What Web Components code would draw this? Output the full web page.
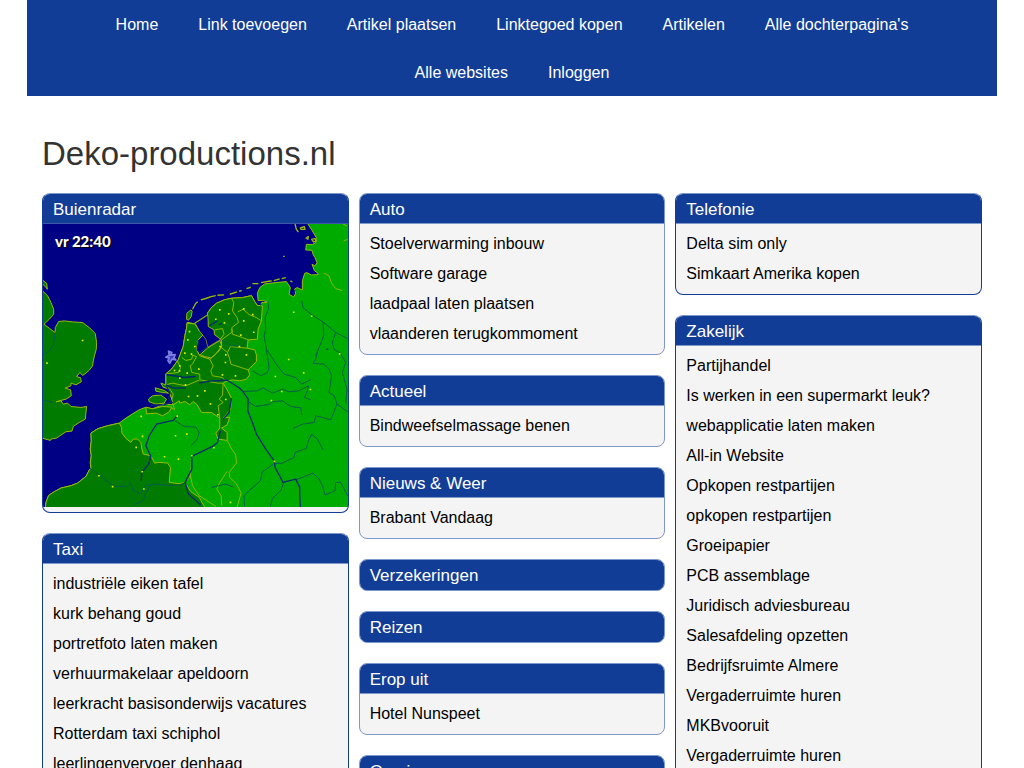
<!DOCTYPE html>
<html lang="nl">
<head>
<meta charset="utf-8">
<meta name="viewport" content="width=device-width, initial-scale=1">
<title>Deko-productions.nl</title>
<style>
  body { margin: 0; background: #fff; color: #000; font-family: "Liberation Sans", Arial, sans-serif; font-size: 16px; }
</style>
</head>
<body>
<dp-page>
  <dp-nav slot="nav">
    <a href="#">Home</a>
    <a href="#">Link toevoegen</a>
    <a href="#">Artikel plaatsen</a>
    <a href="#">Linktegoed kopen</a>
    <a href="#">Artikelen</a>
    <a href="#">Alle dochterpagina's</a>
    <a href="#">Alle websites</a>
    <a href="#">Inloggen</a>
  </dp-nav>
  <span slot="title">Deko-productions.nl</span>
  <dp-column>
    <dp-box heading="Buienradar" flush><dp-radar time="vr 22:40"></dp-radar></dp-box>
    <dp-box heading="Taxi">
      <a href="#">industriële eiken tafel</a>
      <a href="#">kurk behang goud</a>
      <a href="#">portretfoto laten maken</a>
      <a href="#">verhuurmakelaar apeldoorn</a>
      <a href="#">leerkracht basisonderwijs vacatures</a>
      <a href="#">Rotterdam taxi schiphol</a>
      <a href="#">leerlingenvervoer denhaag</a>
    </dp-box>
  </dp-column>
  <dp-column class="mid">
    <dp-box heading="Auto">
      <a href="#">Stoelverwarming inbouw</a>
      <a href="#">Software garage</a>
      <a href="#">laadpaal laten plaatsen</a>
      <a href="#">vlaanderen terugkommoment</a>
    </dp-box>
    <dp-box heading="Actueel"><a href="#">Bindweefselmassage benen</a></dp-box>
    <dp-box heading="Nieuws &amp; Weer"><a href="#">Brabant Vandaag</a></dp-box>
    <dp-box heading="Verzekeringen" empty></dp-box>
    <dp-box heading="Reizen" empty></dp-box>
    <dp-box heading="Erop uit"><a href="#">Hotel Nunspeet</a></dp-box>
    <dp-box heading="Overig" empty></dp-box>
  </dp-column>
  <dp-column>
    <dp-box heading="Telefonie">
      <a href="#">Delta sim only</a>
      <a href="#">Simkaart Amerika kopen</a>
    </dp-box>
    <dp-box heading="Zakelijk">
      <a href="#">Partijhandel</a>
      <a href="#">Is werken in een supermarkt leuk?</a>
      <a href="#">webapplicatie laten maken</a>
      <a href="#">All-in Website</a>
      <a href="#">Opkopen restpartijen</a>
      <a href="#">opkopen restpartijen</a>
      <a href="#">Groeipapier</a>
      <a href="#">PCB assemblage</a>
      <a href="#">Juridisch adviesbureau</a>
      <a href="#">Salesafdeling opzetten</a>
      <a href="#">Bedrijfsruimte Almere</a>
      <a href="#">Vergaderruimte huren</a>
      <a href="#">MKBvooruit</a>
      <a href="#">Vergaderruimte huren</a>
    </dp-box>
  </dp-column>
</dp-page>

<template id="page-tpl">
  <style>
    :host { display: block; max-width: 970px; margin: 0 auto; }
    main { padding: 0 15px 20px; }
    h1 { margin: 40px 0 22px; font-size: 33px; line-height: 35px; font-weight: 400; color: #333; }
    .grid { display: grid; grid-template-columns: repeat(3, minmax(0, 1fr)); gap: 10px; align-items: start; }
    @media (max-width: 700px) { .grid { grid-template-columns: minmax(0, 1fr); } }
  </style>
  <slot name="nav"></slot>
  <main>
    <h1><slot name="title"></slot></h1>
    <div class="grid"><slot></slot></div>
  </main>
</template>

<template id="nav-tpl">
  <style>
    :host { display: block; background: #123d96; }
    nav { display: flex; flex-wrap: wrap; justify-content: center; padding: 0 15px; }
    ::slotted(a) { padding: 2px 20px 0; line-height: 46px; color: #fff; text-decoration: none; }
  </style>
  <nav><slot></slot></nav>
</template>

<template id="column-tpl">
  <style>
    :host { display: flex; flex-direction: column; gap: 20px; }
    :host(.mid) { --edge: #7f98cb; }
  </style>
  <slot></slot>
</template>

<template id="box-tpl">
  <style>
    :host { display: block; box-sizing: border-box; border: 1px solid var(--edge, #123d96); border-top-color: #7f98cb; border-radius: 8px; background: #f4f4f4; overflow: hidden; }
    h2 { box-sizing: border-box; height: 30px; margin: 0; padding: 2px 10px 0; border-bottom: 1px solid #7f98cb; background: #123d96; color: #fff; font-size: 17px; line-height: 28px; font-weight: 400; }
    .body { padding: 5px 10px; }
    :host([flush]) .body { padding: 0 0 5px; }
    :host([flush]) h2 { border-bottom-color: #3c58a8; }
    :host([empty]) .body { display: none; }
    :host([empty]) h2 { border-bottom-color: #123d96; }
    ::slotted(a) { display: block; line-height: 30px; color: #000; text-decoration: none; }
  </style>
  <h2></h2>
  <div class="body"><slot></slot></div>
</template>

<template id="radar-tpl">
  <style>
    :host { display: block; position: relative; }
    svg { display: block; width: 100%; aspect-ratio: 915 / 851; background: #000084; }
    time { position: absolute; left: 12px; top: 7px; font: 900 15px/20px Lato, sans-serif; color: #fff; text-shadow: 1px 1px 1px #000; }
    .land { fill: #00ab00; stroke: #9cbc00; stroke-width: 3; }
    .dark { fill: #007b00; stroke: #9cbc00; stroke-width: 3; }
    .sea { fill: #000084; stroke: #9cbc00; stroke-width: 2; }
    .border { fill: none; stroke: #8cb800; stroke-width: 3; }
    .river { fill: none; stroke: #005c48; stroke-width: 3; }
    .deep { fill: none; stroke: #002a70; stroke-width: 4; }
    .towns { fill: none; stroke: #dcf000; stroke-width: 5; stroke-linecap: square; }
    .isles { fill: none; stroke: #9cbc00; stroke-width: 4; }
    .rain { fill: #4040c0; stroke: #8080e0; stroke-width: 5; }
  </style>
  <svg viewBox="21 114 915 851" preserveAspectRatio="none" role="img" aria-label="Radarkaart" stroke-linejoin="round">
    <!-- continent -->
    <path class="land" d="M28 970L30 950 38 929 55 918 75 907 105 900 125 892 150 872 160 853 165 848 163 830 166 810 163 790 166 765 165 742 185 729 215 720 250 712 270 697 290 684 310 672 328 665 350 669 385 655 412 657 408 640 400 615 390 597 390 564 407 550 427 522 442 482 447 450 452 427 454 410 477 414 492 437 502 447 487 462 482 492 492 510 522 520 545 500 557 485 557 462 537 447 534 432 517 422 515 382 527 365 542 352 565 342 587 337 620 335 647 329 657 347 664 358 672 360 678 350 694 349 684 344 667 344 665 322 672 305 687 294 720 290 752 287 764 305 760 325 774 333 780 322 776 310 784 305 800 312 800 285 807 262 813 260 827 267 847 266 847 262 836 254 829 235 838 240 844 230 838 215 832 205 829 193 810 192 812 175 830 176 840 170 842 155 827 130 814 110H945V975Z"/>
    <!-- England -->
    <path class="dark" d="M15 310L35 330 45 350 53 370 53 385 40 400 24 415 40 427 57 440 58 425 68 407 85 405 110 408 140 410 160 425 178 443 182 470 181 490 176 508 172 525 170 540 160 553 150 562 140 569 132 560 122 572 134 576 136 588 120 597 105 592 105 600 88 607 104 612 106 630 90 640 60 648 75 645 82 655 95 652 105 662 135 665 152 662 148 700 130 710 112 722 108 736 90 738 75 748 62 757 45 760 43 764 15 756Z"/>
    <path class="dark" d="M15 278L24 286 32 292 34 310 28 302 15 290Z"/>
    <!-- France -->
    <path class="dark" d="M28 970L30 950 38 929 55 918 75 907 105 900 125 892 150 872 160 853 165 848 163 830 166 810 163 790 166 765 165 742 185 729 215 720 250 712 257 725 258 742 270 758 285 770 292 760 305 760 315 770 318 790 322 805 345 810 356 832 370 830 395 832 404 845 400 890 430 894 447 890 465 918 490 935 510 970Z"/>
    <!-- Netherlands -->
    <path class="dark" d="M412 657L408 640 400 615 390 597 390 564 407 550 427 522 442 482 447 450 452 427 454 410 477 414 492 437 502 447 487 462 482 492 492 510 522 520 545 500 557 485 557 462 537 447 534 432 517 422 515 382 527 365 542 352 565 342 587 337 620 335 647 329 657 347 664 358 680 360 677 405 667 430 665 460 637 462 634 487 657 492 662 507 662 527 637 552 642 567 632 580 612 585 590 582 570 587 562 592 574 612 587 637 584 672 562 697 582 694 574 717 557 727 574 740 574 764 547 760 540 742 552 727 552 697 527 680 497 680 484 657 472 647 462 657 447 647 432 652 430 645Z"/>
    <path class="dark" d="M330 664L350 669 380 662 408 664 400 678 380 690 360 682 332 684Z"/>
    <path class="dark" d="M338 640L350 630 375 628 392 640 385 652 360 655 340 648ZM358 606L385 614 398 622 380 620 360 616ZM375 592L390 597 400 610 382 604Z"/>
    <!-- IJsselmeer and the polders -->
    <path class="sea" d="M478 412L516 388 517 422 534 432 536 447 557 462 545 466 516 484 510 460 500 447 492 437Z"/>
    <path class="dark" d="M493 506L515 487 552 464 558 480 542 502 526 516 505 512Z"/>
    <path class="deep" d="M488 462L484 492 494 500 514 482M520 420L545 405M550 417L558 412M662 345L676 358M772 325L778 312M392 600L402 622 398 640M358 624L388 624M345 658L385 657 404 650"/>
    <path class="dark" d="M452 400L453 382 465 372 469 376 466 392 458 403Z"/>
    <!-- Wadden islands -->
    <path class="isles" d="M470 370L480 352 486 348M495 342L512 337 526 332 540 329M545 328L565 327M582 325L604 318M610 316L618 314M632 308L645 304M650 293L668 293M676 290L700 286 708 285M714 284L732 279M738 278L750 275M764 285L770 288M778 114L782 130 788 138M742 211h5M794 126L806 122 808 130 796 130ZM810 158L818 152 816 162M828 160L838 158 842 165 834 168Z"/>
    <path class="border" d="M454 412L473 414 516 386M865 262L880 270 888 292 900 308 920 314M922 114L934 120M924 165L936 160"/>
    <!-- provinces and borders -->
    <path class="border" d="M587 337L594 350 590 375 604 395 608 410 588 425 590 438 557 462M606 378L622 370 640 386 662 395 677 405M587 430L590 445 620 455 637 462M537 432L560 428 565 445 552 462M438 515L450 524 468 520 470 508 482 512M424 523L434 546 428 560 390 564M482 512L470 535 463 540 468 560 492 565 492 580M522 520L532 540 525 555 530 570 560 575 570 587M557 485L575 500 582 520 585 535 637 552M575 500L584 482 634 487M390 597L410 592 450 600 492 582 545 592 562 592M562 592L560 628 550 640 562 650 547 660 552 697M412 657L416 672 404 664M402 610L412 625 408 640"/>
    <path class="border" d="M574 764L588 790 600 808 602 832 580 860 582 875 602 895 616 922 604 964M574 857L552 890 543 910 556 930 558 960M628 770"/>
    <path class="border" d="M447 890L462 875 465 850 468 812M462 860L470 900 490 930 540 962"/>
    <!-- rivers -->
    <path class="river" d="M162 848L186 864 208 882 235 902 270 902 285 893 292 915 315 924 330 900 360 895 400 900 430 898 450 890M292 964L296 956 322 945 330 920 345 897M21 505L35 500 52 478 57 440M21 642L50 650M558 465L575 470 584 480 620 480 632 465M697 350L698 370 688 395 690 430 685 450 692 490 700 545 695 560 675 570 650 555M694 492L725 540 745 565 780 575 798 595 825 582M798 345L802 365 830 388 862 408 900 440 936 458M862 408L864 450 840 510M900 440L890 470 895 490 914 502M846 492L840 520 832 532 865 535 880 550 888 570 880 620 896 630 904 655 936 678M904 655L890 690 885 702 840 690 836 710 800 715 790 720 772 728M914 502L930 530 920 560 934 610 930 655M625 617L665 615 682 606 710 622 740 610 760 618 790 615 818 600 815 615 806 635 825 642M637 648L660 662 700 656 710 648 740 645 765 662 795 666 798 688M716 834L740 832 775 815 778 800 812 788 818 765 828 745 845 760 862 792M712 836L680 858 674 885 640 915 625 930 626 962M744 890L735 915 710 938 704 962M780 882L800 875 832 862 850 880 860 900 868 928 898 915 900 890 915 890 936 930M528 905L548 900 570 895 592 904M417 705L445 722 480 724 490 740 484 760 466 780"/>
    <path class="deep" d="M390 597L415 607 450 606M555 582L576 584 610 606 622 618 637 640 636 675 650 710 662 745 690 790 715 825 718 845 742 890 780 880 792 905 792 930 794 964M587 637L580 680 562 700M424 690L412 704 362 715 340 750 330 780 345 812 338 835 318 860 316 885M554 735L545 770 530 782 468 812 468 850 448 890 458 925 495 958M392 566L445 575 480 572M560 584L525 585 490 592M402 640L410 652M872 490h6"/>
    <path class="towns" d="M140 464h0M33 532h0M552 372h0M579 384h0M540 400h0M566 411h0M624 369h0M651 386h0M624 405h0M654 439h0M615 448h0M461 437h0M456 462h0M477 482h0M447 502h0M467 505h0M416 554h0M432 540h0M431 555h0M454 562h0M489 550h0M553 482h0M570 507h0M611 482h0M632 507h0M569 530h0M599 570h0M560 567h0M432 577h0M449 597h0M458 632h0M485 630h0M507 615h0M524 654h0M570 641h0M546 687h0M774 379h0M828 391h0M912 504h0M759 521h0M804 561h0M719 572h0M738 617h0M707 644h0M824 611h0M716 827h0M316 692h0M320 752h0M301 785h0M386 813h0M428 820h0M419 750h0M453 745h0M189 870h0M230 903h0M324 910h0M319 858h0M534 786h0M584 950h0M468 810h0M424 691h0"/>
    <path class="rain" d="M398 496L408 500 404 508 418 506 414 516 420 522 408 520 402 532 396 524 400 516 390 514 400 508Z"/>
  </svg>
  <time></time>
</template>

<script>
  function stamp(host, id) {
    const root = host.attachShadow({ mode: "open" });
    root.append(document.getElementById(id).content.cloneNode(true));
    return root;
  }
  customElements.define("dp-page", class extends HTMLElement {
    constructor() { super(); stamp(this, "page-tpl"); }
  });
  customElements.define("dp-nav", class extends HTMLElement {
    constructor() { super(); stamp(this, "nav-tpl"); }
  });
  customElements.define("dp-column", class extends HTMLElement {
    constructor() { super(); stamp(this, "column-tpl"); }
  });
  customElements.define("dp-box", class extends HTMLElement {
    constructor() { super(); stamp(this, "box-tpl"); }
    connectedCallback() { this.shadowRoot.querySelector("h2").textContent = this.getAttribute("heading"); }
  });
  customElements.define("dp-radar", class extends HTMLElement {
    constructor() { super(); stamp(this, "radar-tpl"); }
    connectedCallback() { this.shadowRoot.querySelector("time").textContent = this.getAttribute("time"); }
  });
</script>
</body>
</html>
